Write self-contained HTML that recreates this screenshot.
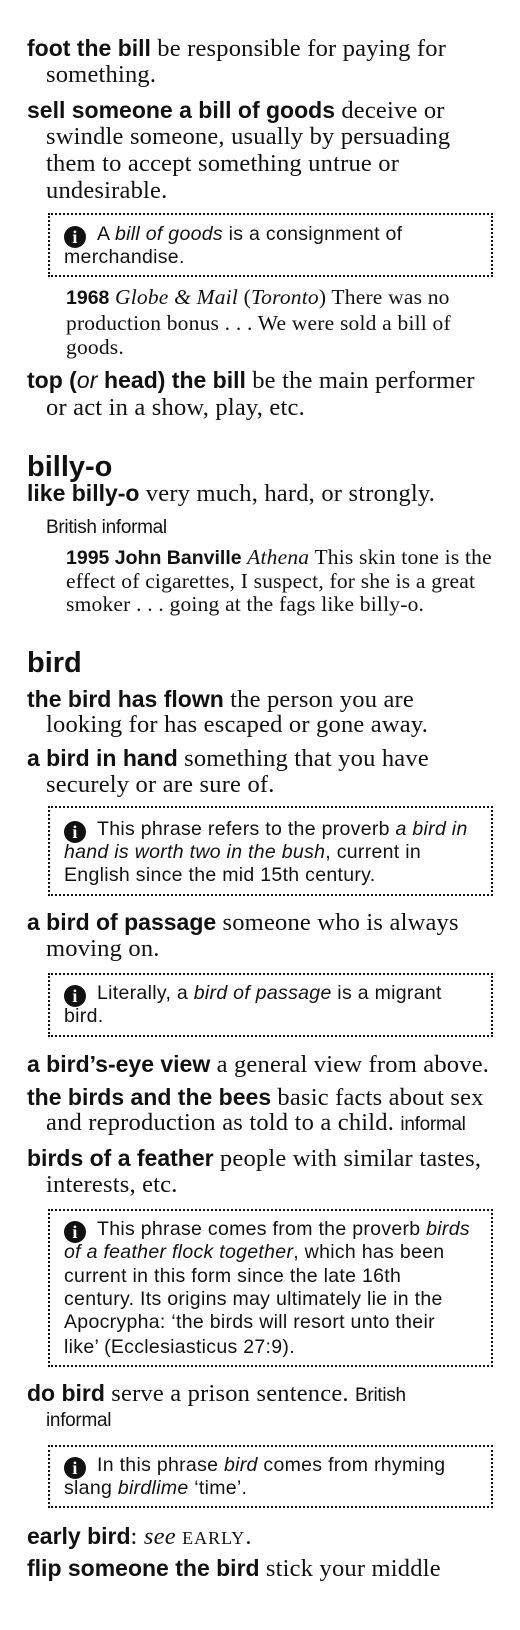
<!DOCTYPE html>
<html><head><meta charset="utf-8"><style>
body{margin:0;width:520px;height:1630px;background:#fff;position:relative;overflow:hidden;color:#111}
.l{position:absolute;white-space:nowrap;height:28px;line-height:28px;font-family:"Liberation Serif",serif;font-size:24.5px;letter-spacing:0.2px}
.l b{font-family:"Liberation Sans",sans-serif;font-size:23px;font-weight:bold;letter-spacing:0}
.s{font-family:"Liberation Sans",sans-serif;font-size:19px;letter-spacing:-0.3px}
.n{position:absolute;white-space:nowrap;height:24px;line-height:24px;font-family:"Liberation Sans",sans-serif;font-size:19.5px;left:64px;letter-spacing:0.3px}
.q{position:absolute;white-space:nowrap;height:24px;line-height:24px;font-family:"Liberation Serif",serif;font-size:21.5px;left:66px;letter-spacing:0.2px}
.q b{font-family:"Liberation Sans",sans-serif;font-size:19.5px;letter-spacing:0}
.h{position:absolute;left:27px;font-family:"Liberation Sans",sans-serif;font-weight:bold;font-size:29px;height:34px;line-height:34px}
.box{position:absolute;left:48px;width:445px;border:2px dotted #111;box-sizing:border-box}
.i{display:inline-block;width:22px;height:22px;border-radius:50%;background:#111;color:#fff;font-family:"Liberation Serif",serif;font-weight:bold;font-size:18px;line-height:22px;text-align:center;vertical-align:-3px;margin-right:11px}
.sc{font-size:18px;letter-spacing:1px}
</style></head><body>
<div class="l" style="left:27px;top:34px"><b>foot the bill</b> be responsible for paying for</div>
<div class="l" style="left:46px;top:61px">something.</div>
<div class="l" style="left:27px;top:96px"><b>sell someone a bill of goods</b> deceive or</div>
<div class="l" style="left:46px;top:123px">swindle someone, usually by persuading</div>
<div class="l" style="left:46px;top:150px">them to accept something untrue or</div>
<div class="l" style="left:46px;top:177px">undesirable.</div>
<div class="box" style="top:213px;height:64px"></div>
<div class="n" style="top:222px"><span class="i">i</span>A <i>bill of goods</i> is a consignment of</div>
<div class="n" style="top:245px">merchandise.</div>
<div class="q" style="top:285px"><b>1968</b> <i>Globe &amp; Mail</i> (<i>Toronto</i>) There was no</div>
<div class="q" style="top:311px">production bonus . . . We were sold a bill of</div>
<div class="q" style="top:335px">goods.</div>
<div class="l" style="left:27px;top:366px"><b>top (</b><i style="font-family:'Liberation Sans',sans-serif;font-size:23px">or</i><b> head) the bill</b> be the main performer</div>
<div class="l" style="left:46px;top:394px">or act in a show, play, etc.</div>
<div class="h" style="top:450px">billy-o</div>
<div class="l" style="left:27px;top:479px"><b>like billy-o</b> very much, hard, or strongly.</div>
<div class="l s" style="left:46px;top:514px">British informal</div>
<div class="q" style="top:545px"><b>1995 John Banville</b> <i>Athena</i> This skin tone is the</div>
<div class="q" style="top:569px">effect of cigarettes, I suspect, for she is a great</div>
<div class="q" style="top:592px">smoker . . . going at the fags like billy-o.</div>
<div class="h" style="top:646px">bird</div>
<div class="l" style="left:27px;top:685px"><b>the bird has flown</b> the person you are</div>
<div class="l" style="left:46px;top:711px">looking for has escaped or gone away.</div>
<div class="l" style="left:27px;top:744px"><b>a bird in hand</b> something that you have</div>
<div class="l" style="left:46px;top:771px">securely or are sure of.</div>
<div class="box" style="top:806px;height:90px"></div>
<div class="n" style="top:817px"><span class="i">i</span>This phrase refers to the proverb <i>a bird in</i></div>
<div class="n" style="top:840px"><i>hand is worth two in the bush</i>, current in</div>
<div class="n" style="top:863px">English since the mid 15th century.</div>
<div class="l" style="left:27px;top:908px"><b>a bird of passage</b> someone who is always</div>
<div class="l" style="left:46px;top:935px">moving on.</div>
<div class="box" style="top:973px;height:64px"></div>
<div class="n" style="top:981px"><span class="i">i</span>Literally, a <i>bird of passage</i> is a migrant</div>
<div class="n" style="top:1004px">bird.</div>
<div class="l" style="left:27px;top:1050px"><b>a bird’s-eye view</b> a general view from above.</div>
<div class="l" style="left:27px;top:1083px"><b>the birds and the bees</b> basic facts about sex</div>
<div class="l" style="left:46px;top:1109px">and reproduction as told to a child. <span class="s">informal</span></div>
<div class="l" style="left:27px;top:1144px"><b>birds of a feather</b> people with similar tastes,</div>
<div class="l" style="left:46px;top:1171px">interests, etc.</div>
<div class="box" style="top:1209px;height:158px"></div>
<div class="n" style="top:1217px"><span class="i">i</span>This phrase comes from the proverb <i>birds</i></div>
<div class="n" style="top:1240px"><i>of a feather flock together</i>, which has been</div>
<div class="n" style="top:1264px">current in this form since the late 16th</div>
<div class="n" style="top:1287px">century. Its origins may ultimately lie in the</div>
<div class="n" style="top:1310px">Apocrypha: ‘the birds will resort unto their</div>
<div class="n" style="top:1335px">like’ (Ecclesiasticus 27:9).</div>
<div class="l" style="left:27px;top:1379px"><b>do bird</b> serve a prison sentence. <span class="s">British</span></div>
<div class="l s" style="left:46px;top:1407px">informal</div>
<div class="box" style="top:1445px;height:63px"></div>
<div class="n" style="top:1453px"><span class="i">i</span>In this phrase <i>bird</i> comes from rhyming</div>
<div class="n" style="top:1476px">slang <i>birdlime</i> ‘time’.</div>
<div class="l" style="left:27px;top:1522px"><b>early bird</b>: <i>see</i> <span class="sc">EARLY</span>.</div>
<div class="l" style="left:27px;top:1554px"><b>flip someone the bird</b> stick your middle</div>
</body></html>
